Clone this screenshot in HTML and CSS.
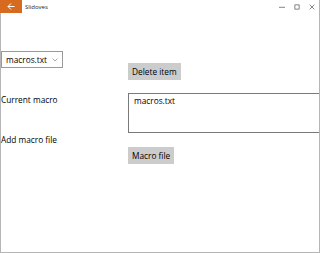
FILE: index.html
```html
<!DOCTYPE html>
<html lang="en">

<head>
    <title>Slidoves</title>
    <link rel="stylesheet" href="styles.css">
</head>

<body>
    <div class="window">
        <div class="titlebar">
            <div class="back">
                <svg width="8" height="7" viewBox="0 0 8 7">
                    <path d="M4 0.5 L1 3.5 L4 6.5 M1 3.5 H7.5" fill="none" stroke="#fff" stroke-width="1"/>
                </svg>
            </div>
            <span class="title">Slidoves</span>
            <div class="controls">
                <svg width="10" height="10" viewBox="0 0 10 10"><path d="M0 5.5 H10" stroke="#333" stroke-width="1"/></svg>
                <svg width="10" height="10" viewBox="0 0 10 10"><rect x="1.5" y="1.5" width="7" height="7" fill="none" stroke="#333" stroke-width="1"/></svg>
                <svg width="10" height="10" viewBox="0 0 10 10"><path d="M1 1 L9 9 M9 1 L1 9" stroke="#333" stroke-width="1"/></svg>
            </div>
        </div>
        <div class="content">
            <div class="select">
                <span>macros.txt</span>
                <svg width="6" height="4" viewBox="0 0 6 4"><path d="M0.5 0.5 L3 3 L5.5 0.5" fill="none" stroke="#aaa" stroke-width="1"/></svg>
            </div>
            <button class="btn delete">Delete item</button>
            <div class="label">Current macro</div>
            <div class="textbox">macros.txt</div>
            <div class="label add-label">Add macro file</div>
            <button class="btn add">Macro file</button>
        </div>
    </div>
</body>

</html>
```

FILE: styles.css
```css
*,
*:before,
*:after {
    padding: 0;
    margin: 0;
    box-sizing: border-box;
}

body {
    width: 320px;
    height: 253px;
    background: #fff;
    font-family: 'Open Sans', 'Noto Sans', sans-serif;
    color: #000;
    overflow: hidden;
}

.window {
    height: 253px;
    border: 1px solid #b5b5b5;
    border-top: none;
}

.titlebar {
    height: 13px;
    display: flex;
    align-items: center;
    margin-left: -1px;
    margin-right: -1px;
}

.back {
    width: 22px;
    height: 13px;
    background: #d66a1e;
    display: flex;
    align-items: center;
    justify-content: center;
}

.title {
    font-size: 6px;
    margin-left: 3px;
    color: #222;
}

.controls {
    margin-left: auto;
    display: flex;
    gap: 9px;
    margin-right: 5px;
}

.controls svg {
    width: 6px;
    height: 6px;
}

.content {
    display: grid;
    grid-template-columns: 127px 1fr;
    padding-top: 38px;
    font-size: 8.3px;
    align-items: start;
}

.select {
    width: 62px;
    height: 17px;
    border: 1px solid #9a9a9a;
    display: flex;
    align-items: center;
    justify-content: space-between;
    padding: 0 4px 0 4px;
}

.btn {
    font-family: inherit;
    font-size: 8.3px;
    background: #cccccc;
    border: none;
    color: #000;
    height: 17px;
    justify-self: start;
    padding: 0 4px;
}

.delete {
    margin-top: 12px;
}

.label {
    margin-top: 13px;
    line-height: 14px;
}

.add-label {
    margin-top: 0;
}

.textbox {
    margin-top: 13px;
    height: 40px;
    border: 1px solid #7a7a7a;
    border-right: none;
    padding: 0 5px;
    line-height: 14px;
}

.add {
    margin-top: 14px;
}
```
